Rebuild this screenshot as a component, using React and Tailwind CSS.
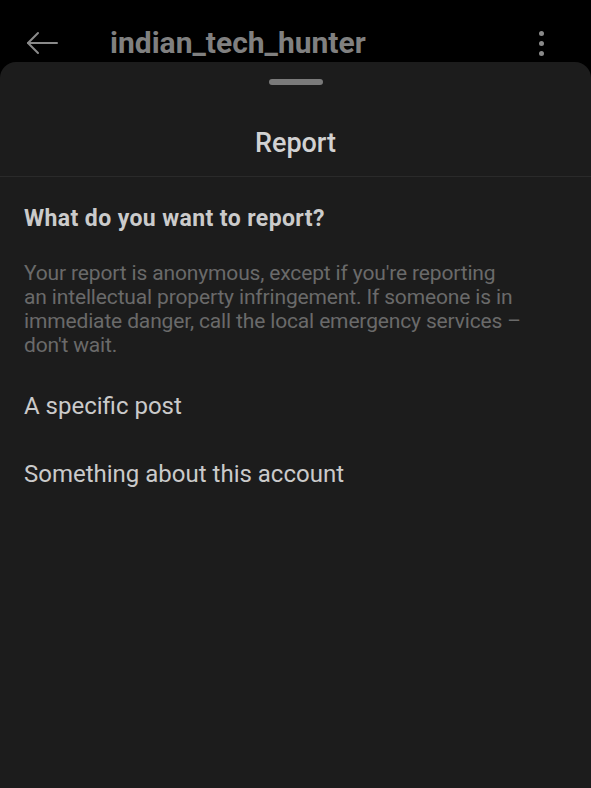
import React from "react";

const App = () => {
  return (
    <div className="w-[591px] h-[788px] bg-black overflow-hidden flex flex-col" style={{ fontFamily: "Roboto, sans-serif" }}>
      {/* top bar behind the sheet */}
      <div className="h-[62px] flex items-center pl-[26px] pt-[24px] text-[#8a8a8a]">
        <svg width="32" height="24" viewBox="0 0 32 24" fill="none" stroke="currentColor" strokeWidth="2" strokeLinecap="round" strokeLinejoin="round">
          <path d="M31 12H2" />
          <path d="M12 2L2 12l10 10" />
        </svg>
        <span className="ml-[52px] text-[30px] font-bold text-[#808080] leading-none">indian_tech_hunter</span>
        <div className="ml-auto mr-[47px] flex flex-col gap-[5px]">
          <span className="w-[5px] h-[5px] rounded-full bg-[#8a8a8a]" />
          <span className="w-[5px] h-[5px] rounded-full bg-[#8a8a8a]" />
          <span className="w-[5px] h-[5px] rounded-full bg-[#8a8a8a]" />
        </div>
      </div>

      {/* report sheet */}
      <div className="flex-1 bg-[#1c1c1c] rounded-t-[16px] flex flex-col">
        <div className="flex justify-center pt-[17px]">
          <div className="w-[54px] h-[6px] rounded-full bg-[#7a7a7a]" />
        </div>
        <div className="h-[91px] flex items-center justify-center pt-[26px] text-[27px] font-medium text-[#d2d2d2]">
          Report
        </div>
        <div className="h-px bg-[#2a2a2a]" />

        <div className="px-[24px] pt-[28px]">
          <h2 className="text-[23px] font-bold tracking-[0.4px] text-[#cbcbcb] leading-[28px]">What do you want to report?</h2>
          {/* lines broken as in the app */}
          <p className="mt-[28px] whitespace-nowrap text-[21px] tracking-[-0.15px] leading-[24px] text-[#6a6a6a]">
            Your report is anonymous, except if you're reporting<br />
            an intellectual property infringement. If someone is in<br />
            immediate danger, call the local emergency services –<br />
            don't wait.
          </p>
          <div className="mt-[25px] flex flex-col text-[24px] text-[#cacaca]">
            <div className="h-[68px] flex items-center pb-[20px]">A specific post</div>
            <div className="h-[68px] flex items-center pb-[20px]">Something about this account</div>
          </div>
        </div>
      </div>
    </div>
  );
};

export default App;
